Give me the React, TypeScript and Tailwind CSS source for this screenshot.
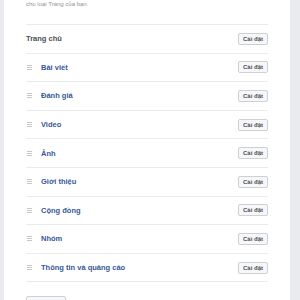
import React from 'react';

const tabs = ['Bài viết', 'Đánh giá', 'Video', 'Ảnh', 'Giới thiệu', 'Cộng đồng', 'Nhóm', 'Thông tin và quảng cáo'];

const SettingsButton = () => (
  <button className="h-[12px] w-[30px] rounded-[2px] border border-[#ced0d4] bg-[#f6f7f9] text-[6px] font-bold leading-none text-[#4b4f56]">
    Cài đặt
  </button>
);

const DragHandle = () => (
  <svg width="5" height="5" viewBox="0 0 5 5" className="mr-[9px] ml-[1px]">
    <rect x="0" y="0" width="5" height="1" fill="#c4c7cc" />
    <rect x="0" y="2" width="5" height="1" fill="#c4c7cc" />
    <rect x="0" y="4" width="5" height="1" fill="#c4c7cc" />
  </svg>
);

const App = () => {
  return (
    <div className="flex h-[300px] w-[300px] overflow-hidden bg-[#e9ebee]" style={{ fontFamily: '"Liberation Sans", Arial, sans-serif' }}>
      <div className="w-[4px]" />
      <div className="w-[286px] bg-white px-[22px]">
        {/* mô tả phía trên (bị cắt) */}
        <div className="h-[24px]">
          <p className="text-[6px] leading-[9px] text-[#90949c]">cho loại Trang của bạn.</p>
        </div>
        <div className="border-t border-[#e9ebee]">
          <div className="flex h-[28.6px] items-center justify-between border-b border-[#e9ebee]">
            <span className="text-[7.5px] font-bold text-[#4b4f56]">Trang chủ</span>
            <SettingsButton />
          </div>
          {tabs.map((t) => (
            <div key={t} className="flex h-[28.6px] items-center justify-between border-b border-[#e9ebee]">
              <div className="flex items-center">
                <DragHandle />
                <span className="text-[7.5px] font-bold text-[#365899]">{t}</span>
              </div>
              <SettingsButton />
            </div>
          ))}
        </div>
        <div className="mt-[10px]">
          <button className="h-[14px] w-[40px] rounded-[2px] border border-[#ced0d4] bg-[#f6f7f9]" />
        </div>
      </div>
      <div className="flex-1" />
    </div>
  );
};

export default App;
